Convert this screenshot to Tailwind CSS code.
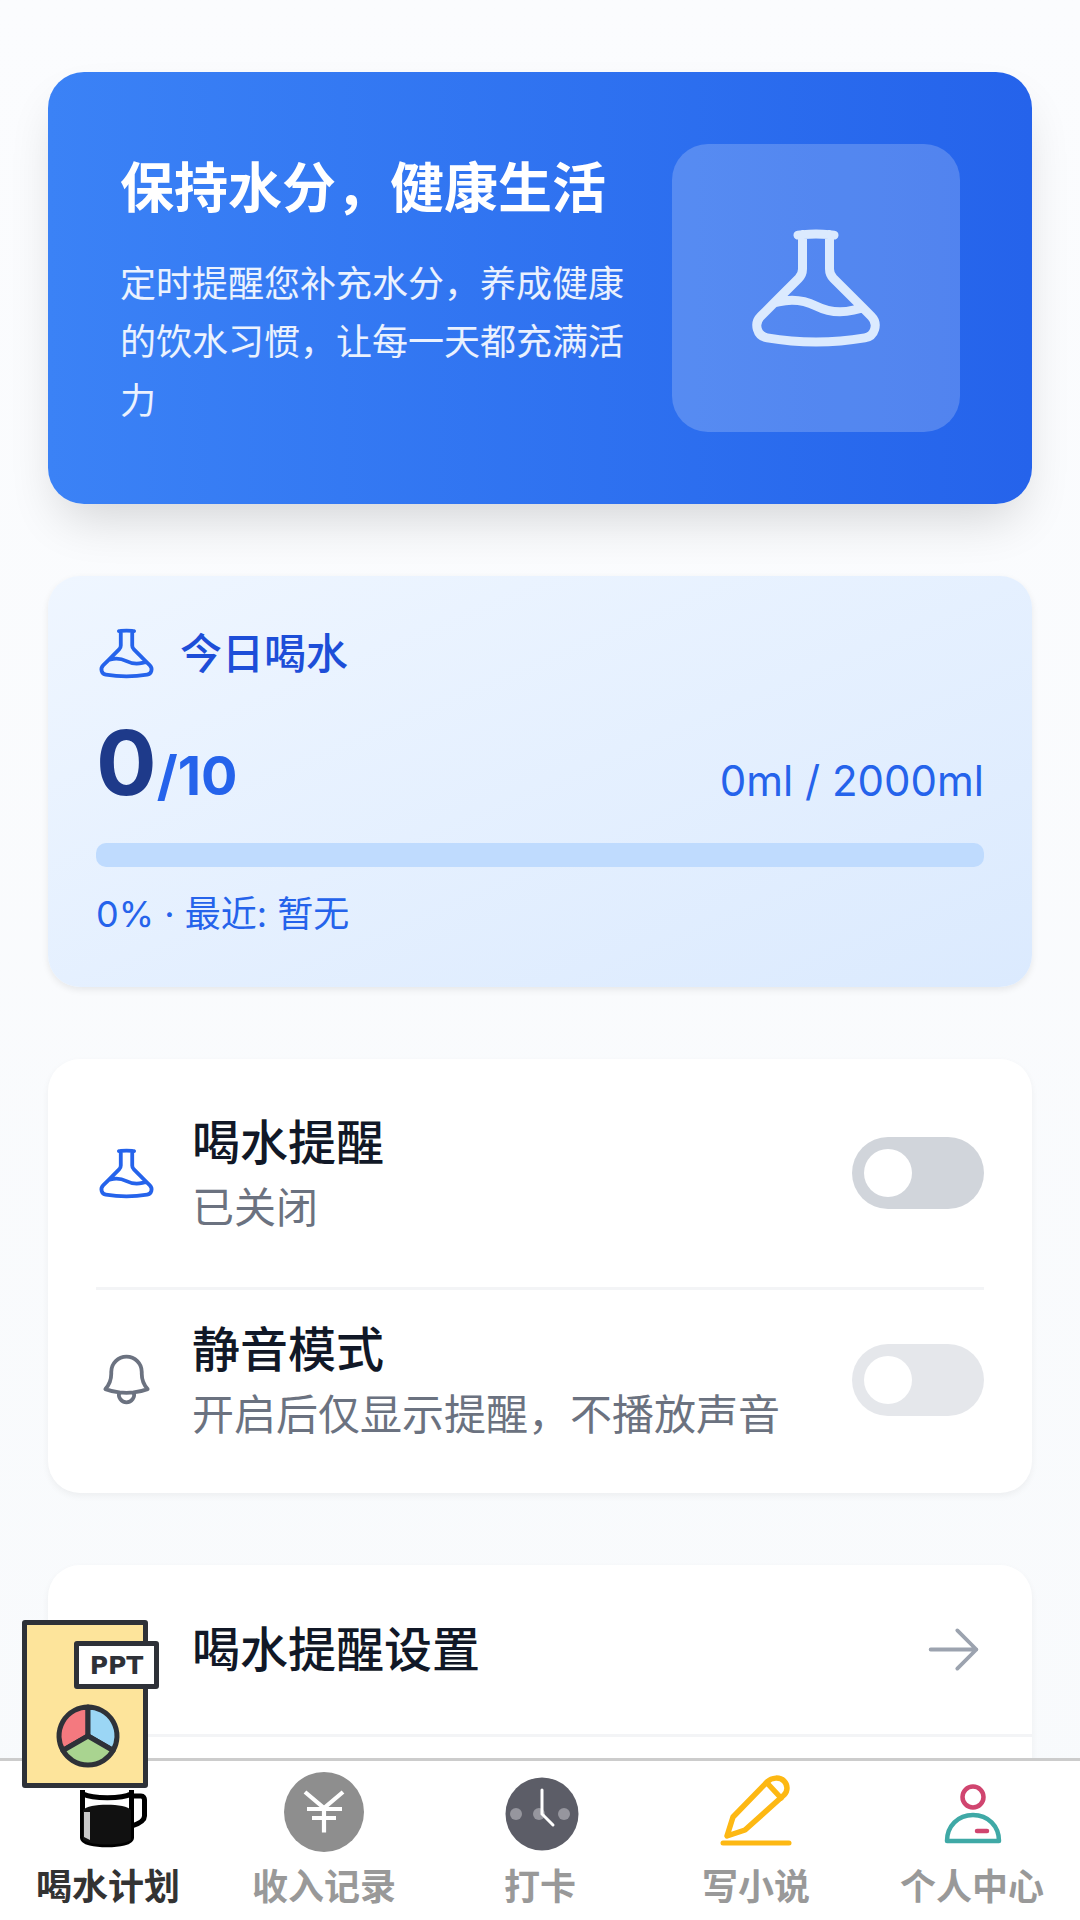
<!DOCTYPE html>
<html lang="zh"><head><meta charset="utf-8"><script src="https://cdn.jsdelivr.net/npm/@tailwindcss/browser@4"></script></head>
<body class="m-0">
<div class="relative w-[1080px] h-[1920px] overflow-hidden bg-gradient-to-b from-[#fbfcfe] to-[#f8fafc] font-['Inter','Noto_Sans_CJK_SC',sans-serif]">
  <main class="flex flex-col gap-[72px] px-[48px] pt-[72px]">
    <section class="flex items-center gap-[48px] h-[432px] rounded-[36px] px-[72px] bg-gradient-to-r from-[#3b82f6] to-[#2563eb] shadow-[0_25px_50px_-12px_rgba(0,0,0,0.16)]">
      <div class="w-[504px] shrink-0 pt-[2px] text-white">
        <h1 class="text-[54px] leading-[81px] font-bold mb-[26px]">保持水分，健康生活</h1>
        <p class="text-[36px] leading-[58.5px] text-white/90">定时提醒您补充水分，养成健康的饮水习惯，让每一天都充满活力</p>
      </div>
      <div class="w-[288px] h-[288px] shrink-0 rounded-[36px] bg-white/20 flex items-center justify-center">
        <svg class="w-[144px] h-[144px] text-[#dbeafe]" viewBox="0 0 24 24" fill="none" stroke="currentColor" stroke-width="1.5" stroke-linecap="round" stroke-linejoin="round"><path d="M9.75 3.104v5.714a2.25 2.25 0 0 1-.659 1.591L5 14.5M9.75 3.104c-.251.023-.501.05-.75.082m.75-.082a24.301 24.301 0 0 1 4.5 0m0 0v5.714c0 .597.237 1.17.659 1.591L19.8 15.3M14.25 3.104c.251.023.501.05.75.082M19.8 15.3l-1.57.393A9.065 9.065 0 0 1 12 15a9.065 9.065 0 0 0-6.23-.693L5 14.5m14.8.8 1.402 1.402c1.232 1.232.65 3.318-1.067 3.611A48.309 48.309 0 0 1 12 21c-2.773 0-5.491-.235-8.135-.687-1.718-.293-2.3-2.379-1.067-3.61L5 14.5"/></svg>
      </div>
    </section>

    <section class="h-[411px] rounded-[32px] px-[48px] pt-[46px] bg-gradient-to-br from-[#eff6ff] to-[#dbeafe] shadow-[0_3px_7px_rgba(0,0,0,0.08)]">
      <div class="flex items-center gap-[23px] h-[63px]">
        <svg class="w-[61px] h-[61px] text-[#2563eb]" viewBox="0 0 24 24" fill="none" stroke="currentColor" stroke-width="1.5" stroke-linecap="round" stroke-linejoin="round"><path d="M9.75 3.104v5.714a2.25 2.25 0 0 1-.659 1.591L5 14.5M9.75 3.104c-.251.023-.501.05-.75.082m.75-.082a24.301 24.301 0 0 1 4.5 0m0 0v5.714c0 .597.237 1.17.659 1.591L19.8 15.3M14.25 3.104c.251.023.501.05.75.082M19.8 15.3l-1.57.393A9.065 9.065 0 0 1 12 15a9.065 9.065 0 0 0-6.23-.693L5 14.5m14.8.8 1.402 1.402c1.232 1.232.65 3.318-1.067 3.611A48.309 48.309 0 0 1 12 21c-2.773 0-5.491-.235-8.135-.687-1.718-.293-2.3-2.379-1.067-3.61L5 14.5"/></svg>
        <span class="text-[42px] font-medium text-[#1d4ed8] leading-none">今日喝水</span>
      </div>
      <div class="flex items-end justify-between mt-[33px] h-[90px]">
        <div class="leading-none"><span class="text-[90px] font-bold text-[#1e3a8a]">0</span><span class="text-[54px] font-bold text-[#2563eb]">/10</span></div>
        <span class="text-[42px] text-[#2563eb] leading-[55px]">0ml / 2000ml</span>
      </div>
      <div class="h-[24px] rounded-[10px] bg-[#bfdbfe] mt-[35px]"></div>
      <p class="text-[36px] leading-[54px] text-[#2563eb] mt-[20px]">0% · 最近: 暂无</p>
    </section>

    <section class="h-[434px] rounded-[32px] bg-white px-[48px] shadow-[0_3px_7px_rgba(0,0,0,0.05)]">
      <div class="flex items-center h-[231px] border-b-[3px] border-[#f3f4f6]">
        <svg class="w-[61px] h-[61px] text-[#2563eb] shrink-0" viewBox="0 0 24 24" fill="none" stroke="currentColor" stroke-width="1.5" stroke-linecap="round" stroke-linejoin="round"><path d="M9.75 3.104v5.714a2.25 2.25 0 0 1-.659 1.591L5 14.5M9.75 3.104c-.251.023-.501.05-.75.082m.75-.082a24.301 24.301 0 0 1 4.5 0m0 0v5.714c0 .597.237 1.17.659 1.591L19.8 15.3M14.25 3.104c.251.023.501.05.75.082M19.8 15.3l-1.57.393A9.065 9.065 0 0 1 12 15a9.065 9.065 0 0 0-6.23-.693L5 14.5m14.8.8 1.402 1.402c1.232 1.232.65 3.318-1.067 3.611A48.309 48.309 0 0 1 12 21c-2.773 0-5.491-.235-8.135-.687-1.718-.293-2.3-2.379-1.067-3.61L5 14.5"/></svg>
        <div class="ml-[35px] flex-1">
          <div class="text-[48px] leading-[70px] font-medium text-[#111827]">喝水提醒</div>
          <div class="text-[42px] leading-[60px] text-[#6b7280]">已关闭</div>
        </div>
        <div class="w-[132px] h-[72px] rounded-full bg-[#d1d5db] flex items-center pl-[12px]"><div class="w-[48px] h-[48px] rounded-full bg-white"></div></div>
      </div>
      <div class="flex items-center h-[203px] pt-[24px] pb-[48px]">
        <svg class="w-[61px] h-[61px] text-[#6b7280] shrink-0" viewBox="0 0 24 24" fill="none" stroke="currentColor" stroke-width="1.5" stroke-linecap="round" stroke-linejoin="round"><path d="M14.857 17.082a23.848 23.848 0 0 0 5.454-1.31A8.967 8.967 0 0 1 18 9.75V9A6 6 0 0 0 6 9v.75a8.967 8.967 0 0 1-2.312 6.022c1.733.64 3.56 1.085 5.455 1.31m5.714 0a24.255 24.255 0 0 1-5.714 0m5.714 0a3 3 0 1 1-5.714 0"/></svg>
        <div class="ml-[35px] flex-1">
          <div class="text-[48px] leading-[70px] font-medium text-[#111827]">静音模式</div>
          <div class="text-[42px] leading-[60px] text-[#6b7280] whitespace-nowrap">开启后仅显示提醒，不播放声音</div>
        </div>
        <div class="w-[132px] h-[72px] rounded-full bg-[#e5e7eb] flex items-center pl-[12px]"><div class="w-[48px] h-[48px] rounded-full bg-white"></div></div>
      </div>
    </section>

    <section class="h-[400px] rounded-[32px] bg-white shadow-[0_3px_7px_rgba(0,0,0,0.05)]">
      <div class="flex items-center justify-between h-[172px] border-b-[3px] border-[#f3f4f6] pl-[144px] pr-[48px]">
        <span class="text-[48px] font-medium text-[#111827]">喝水提醒设置</span>
        <svg class="w-[61px] h-[61px] text-[#9ca3af]" viewBox="0 0 24 24" fill="none" stroke="currentColor" stroke-width="1.5" stroke-linecap="round" stroke-linejoin="round"><path d="M13.5 4.5 21 12m0 0-7.5 7.5M21 12H3"/></svg>
      </div>
    </section>
  </main>

  <nav class="absolute left-0 right-0 bottom-0 h-[162px] bg-white border-t-[3px] border-[#cccccc] grid grid-cols-5 font-['Noto_Sans_CJK_SC',sans-serif]">
    <div class="flex flex-col items-center justify-end pb-[11px]">
      <span class="text-[36px] leading-[50px] font-bold text-[#333333]">喝水计划</span>
    </div>
    <div class="flex flex-col items-center justify-end pb-[11px]">
      <svg class="w-[80px] h-[80px] mb-[7px]" viewBox="0 0 80 80"><circle cx="40" cy="40" r="40" fill="#8e8e8e"/><path d="M21 20 40 36 59 20M40 36V60.500M23 37H58M28 46H52" fill="none" stroke="#fff" stroke-width="4.2"/></svg>
      <span class="text-[36px] leading-[50px] font-bold text-[#999999]">收入记录</span>
    </div>
    <div class="flex flex-col items-center justify-end pb-[11px]">
      <svg class="w-[74px] h-[74px] mb-[8px] ml-[4px]" viewBox="0 0 74 74"><circle cx="37" cy="37" r="36.500" fill="#5c5d67"/><circle cx="11" cy="37" r="6" fill="#96969e"/><circle cx="34" cy="37" r="6" fill="#96969e"/><circle cx="59" cy="37" r="6" fill="#96969e"/><path d="M37 13V37L48 48" fill="none" stroke="#fff" stroke-width="3" stroke-linecap="round"/></svg>
      <span class="text-[36px] leading-[50px] font-bold text-[#999999]">打卡</span>
    </div>
    <div class="flex flex-col items-center justify-end pb-[11px]">
      <svg class="w-[76px] h-[76px] mb-[10px]" viewBox="0 0 76 76" fill="none" stroke="#fdb813" stroke-width="5.500" stroke-linecap="round" stroke-linejoin="round"><path d="M9 63 15 44 49 9C54 4 62 4 66 8 70 12 70 18 66 22L27 57Z"/><path d="M50 11 63 25"/><path d="M5 70H71" stroke-width="5"/></svg>
      <span class="text-[36px] leading-[50px] font-bold text-[#999999]">写小说</span>
    </div>
    <div class="flex flex-col items-center justify-end pb-[11px]">
      <svg class="w-[60px] h-[68px] mb-[11px]" viewBox="0 0 60 68" fill="none" stroke-width="4.500"><circle cx="31" cy="17" r="10.500" stroke="#d0456f"/><path d="M5 61C5 46 16 35 31 35S57 46 57 61Z" stroke="#3fa9a6" stroke-linejoin="round"/><path d="M35 51H45" stroke="#d0456f" stroke-linecap="round"/></svg>
      <span class="text-[36px] leading-[50px] font-bold text-[#999999]">个人中心</span>
    </div>
  </nav>

  <svg class="absolute left-[78px] top-[1786px] w-[72px] h-[62px]" viewBox="0 0 72 62">
    <path d="M4 4C14 9 44 9 54 4V54C44 60 14 60 4 54Z" fill="#fff"/>
    <path d="M4.500 4V52C4.500 61 53.500 61 53.500 52V4M5 8C15 13 44 13 53 8" fill="none" stroke="#000" stroke-width="5"/>
    <path d="M5 24C10 17 48 17 53 24V54C44 60 14 60 5 54Z" fill="#111"/>
    <path d="M6 26H12V54L6 51Z" fill="#c9c9c9"/>
    <path d="M54 10H63C65.500 10 66.500 12 66.500 14V30C66.500 35 60 38 54 40" fill="none" stroke="#000" stroke-width="5"/>
  </svg>
  <div class="absolute left-[22px] top-[1620px] w-[126px] h-[168px] rounded-[3px] bg-[#fde49b] border-[5px] border-[#2e3138]">
    <svg class="absolute left-[28.5px] top-[78.5px] w-[64px] h-[64px]" viewBox="0 0 64 64" stroke="#2e3138" stroke-width="5" stroke-linejoin="round">
      <path d="M32 32V3A29 29 0 0 0 6.900 46.500Z" fill="#f4797f"/>
      <path d="M32 32V3A29 29 0 0 1 57.100 46.500Z" fill="#9bd6f5"/>
      <path d="M32 32 6.900 46.500A29 29 0 0 0 57.100 46.500Z" fill="#a9d490"/>
    </svg>
  </div>
  <div class="absolute left-[74px] top-[1641px] w-[85px] h-[48px] rounded-[3px] bg-white border-[5px] border-[#2e3138] flex items-center justify-center text-[#2e3138] text-[25px] font-bold font-['DejaVu_Sans',sans-serif] leading-none">PPT</div>
</div>
</body></html>
